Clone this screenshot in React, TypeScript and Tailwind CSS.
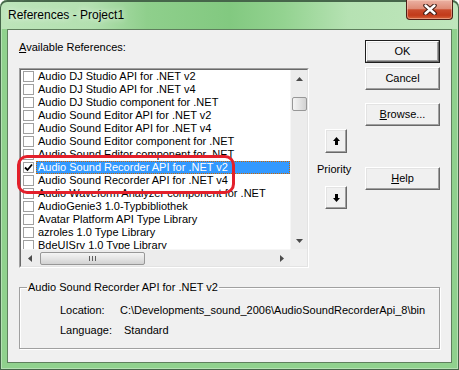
import type { ReactNode } from 'react'

const ITEMS = [
  'Audio DJ Studio API for .NET v2',
  'Audio DJ Studio API for .NET v4',
  'Audio DJ Studio component for .NET',
  'Audio Sound Editor API for .NET v2',
  'Audio Sound Editor API for .NET v4',
  'Audio Sound Editor component for .NET',
  'Audio Sound Editor component for .NET',
  'Audio Sound Recorder API for .NET v2',
  'Audio Sound Recorder API for .NET v4',
  'Audio Waveform Analyzer component for .NET',
  'AudioGenie3 1.0-Typbibliothek',
  'Avatar Platform API Type Library',
  'azroles 1.0 Type Library',
  'BdeUISrv 1.0 Type Library',
]

const CHECKED = 7

const bevel =
  'border border-t-white border-l-white border-r-[#696969] border-b-[#696969] bg-[#f0f0f0] shadow-[inset_-1px_-1px_0_#a0a0a0,inset_1px_1px_0_#e3e3e3]'

function PushButton({ children, className = '' }: { children: ReactNode; className?: string }) {
  return (
    <button type="button" className={`${bevel} w-[75px] h-[23px] text-[11px] leading-[13px] text-black ${className}`}>
      {children}
    </button>
  )
}

function ArrowButton({ up, className = '' }: { up?: boolean; className?: string }) {
  return (
    <button type="button" className={`${bevel} w-[22px] flex items-center justify-center ${className}`}>
      <svg width="7" height="8" viewBox="0 0 7 8" className={up ? '' : 'rotate-180'}>
        <path d="M3.5 0 L7 4 H5 V8 H2 V4 H0 Z" fill="#000" />
      </svg>
    </button>
  )
}

function Tri({ dir }: { dir: 'up' | 'down' | 'left' | 'right' }) {
  const d = {
    up: 'M3.5 0 L7 4 H0 Z',
    down: 'M0 0 H7 L3.5 4 Z',
    left: 'M4 0 V7 L0 3.5 Z',
    right: 'M0 0 L4 3.5 L0 7 Z',
  }[dir]
  const vertical = dir === 'up' || dir === 'down'
  return (
    <svg width={vertical ? 7 : 4} height={vertical ? 4 : 7} viewBox={vertical ? '0 0 7 4' : '0 0 4 7'}>
      <path d={d} fill="#4a4a4a" />
    </svg>
  )
}

function CheckBox({ checked }: { checked: boolean }) {
  return (
    <span className="w-[11px] h-[11px] shrink-0 border border-[#a0a0a0] bg-white flex items-center justify-center">
      {checked && (
        <svg width="9" height="9" viewBox="0 0 9 9">
          <path d="M1 4.5 L3.5 7 L8 1.5" stroke="#000" strokeWidth="1.8" fill="none" />
        </svg>
      )}
    </span>
  )
}

function ListBox() {
  return (
    <div className="relative mt-[14px]">
      <div className="h-[200px] border border-t-[#a0a0a0] border-l-[#a0a0a0] border-r-white border-b-white">
        <div className="h-full border border-t-[#696969] border-l-[#696969] border-r-[#e3e3e3] border-b-[#e3e3e3] bg-white grid grid-cols-[1fr_17px] grid-rows-[1fr_17px]">
          <div className="overflow-hidden">
            {ITEMS.map((item, i) => (
              <div key={i} className="h-[13px] flex items-center">
                <span className="ml-[2px] mr-[2px]">
                  <CheckBox checked={i === CHECKED} />
                </span>
                <span
                  className={
                    i === CHECKED
                      ? 'flex-1 h-[13px] leading-[11px] pl-[1px] whitespace-nowrap bg-[#3399ff] text-white border border-dotted border-[#cc6600]'
                      : 'flex-1 h-[13px] leading-[13px] pl-[2px] whitespace-nowrap text-black'
                  }
                >
                  {item}
                </span>
              </div>
            ))}
          </div>
          <div className="bg-[#ececec] flex flex-col border-l border-[#f6f6f6]">
            <div className="h-[17px] flex items-center justify-center">
              <Tri dir="up" />
            </div>
            <div className="mt-[10px] ml-[1px] w-[15px] h-[14px] rounded-[2px] border border-[#979797] bg-[linear-gradient(90deg,#f4f4f4,#e4e4e4_50%,#d2d2d2)]" />
            <div className="mt-auto h-[17px] flex items-center justify-center">
              <Tri dir="down" />
            </div>
          </div>
          <div className="bg-[#ececec] flex items-center border-t border-[#f6f6f6]">
            <div className="w-[17px] h-full flex items-center justify-center">
              <Tri dir="left" />
            </div>
            <div className="ml-[2px] w-[105px] h-[13px] rounded-[2px] border border-[#979797] bg-[linear-gradient(180deg,#f4f4f4,#e4e4e4_50%,#d2d2d2)] flex items-center justify-center gap-[2px]">
              <span className="w-[1px] h-[5px] bg-[#5f5f5f]" />
              <span className="w-[1px] h-[5px] bg-[#5f5f5f]" />
              <span className="w-[1px] h-[5px] bg-[#5f5f5f]" />
            </div>
            <div className="ml-auto w-[17px] h-full flex items-center justify-center">
              <Tri dir="right" />
            </div>
          </div>
          <div className="bg-[#f0f0f0]" />
        </div>
      </div>
      {/* red annotation drawn over the list */}
      <div className="absolute left-[-2px] top-[87px] w-[218px] h-[39px] rounded-[10px] border-[3px] border-[#e3202b] pointer-events-none" />
    </div>
  )
}

export default function App() {
  return (
    <div className="w-[459px] h-[370px] rounded-t-[7px] bg-[#90d18d] shadow-[inset_0_0_0_1px_#46664a,inset_0_0_0_2px_rgba(255,255,255,0.35)] flex flex-col font-['Liberation_Sans',Arial,sans-serif] overflow-hidden">
      <div className="h-[29px] shrink-0 flex items-start rounded-t-[7px] bg-[linear-gradient(90deg,#bde5ba_0%,#b3e0b0_20%,#8fcf8c_32%,#82c980_50%,#94d391_62%,#b6e2b3_76%,#bfe6bc_100%)] shadow-[inset_0_1px_0_1px_#46664a]">
        <div className="h-[29px] flex items-center pl-[8px] text-[12px] text-black [text-shadow:0_0_6px_rgba(255,255,255,0.95)]">
          References - Project1
        </div>
        <button
          type="button"
          className="ml-auto mr-[6px] w-[47px] h-[20px] rounded-b-[4px] border border-t-0 border-[#4d1f16] bg-[linear-gradient(180deg,#ebb2a4_0%,#df8c77_45%,#c94b2d_52%,#c23a1a_80%,#d6633b_100%)] shadow-[inset_0_0_0_1px_rgba(255,220,200,0.45)] flex items-center justify-center"
        >
          <svg width="14" height="11" viewBox="0 0 14 11">
            <path d="M2.5 1.5 L11.5 9.5 M11.5 1.5 L2.5 9.5" stroke="#3d1a12" strokeWidth="4.5" strokeLinecap="round" />
            <path d="M2.5 1.5 L11.5 9.5 M11.5 1.5 L2.5 9.5" stroke="#ffffff" strokeWidth="2.4" strokeLinecap="round" />
          </svg>
        </button>
      </div>
      <div className="mx-[7px] h-[334px] border border-[#5f7f5d] bg-[#f0f0f0] pt-[10px] pl-[11px] flex flex-col text-[11px] text-black">
        <div className="flex">
          <div className="w-[290px]">
            <div className="mt-[1px] h-[13px] leading-[13px]">
              <span className="underline">A</span>vailable References:
            </div>
            <ListBox />
          </div>
          <div className="w-[56px] flex flex-col items-start">
            <ArrowButton up className="mt-[89px] ml-[16px] h-[24px]" />
            <div className="mt-[10px] ml-[8px] h-[13px] leading-[13px]">Priority</div>
            <ArrowButton className="mt-[10px] ml-[16px] h-[23px]" />
          </div>
          <div className="w-[75px] flex flex-col">
            <div className="w-[75px] h-[23px] border border-[#1e1e1e]">
              <button
                type="button"
                className={`${bevel} w-full h-full text-[11px] leading-[13px]`}
              >
                OK
              </button>
            </div>
            <PushButton className="mt-[4px]">Cancel</PushButton>
            <PushButton className="mt-[13px]">
              <span className="underline">B</span>rowse...
            </PushButton>
            <PushButton className="mt-[41px]">
              <span className="underline">H</span>elp
            </PushButton>
          </div>
        </div>
        <fieldset className="mt-[13px] w-[421px] border border-[#a0a0a0] shadow-[inset_1px_1px_0_#fff,1px_1px_0_#fff] pl-[7px] pb-[11px]">
          <legend className="px-[1px] h-[13px] leading-[13px]">Audio Sound Recorder API for .NET v2</legend>
          <div className="ml-[33px] mt-[10px] h-[13px] leading-[13px] flex">
            <span className="w-[60px]">Location:</span>
            <span>C:\Developments_sound_2006\AudioSoundRecorderApi_8\bin</span>
          </div>
          <div className="ml-[33px] mt-[7px] h-[13px] leading-[13px] flex">
            <span className="w-[64px]">Language:</span>
            <span>Standard</span>
          </div>
        </fieldset>
      </div>
    </div>
  )
}
